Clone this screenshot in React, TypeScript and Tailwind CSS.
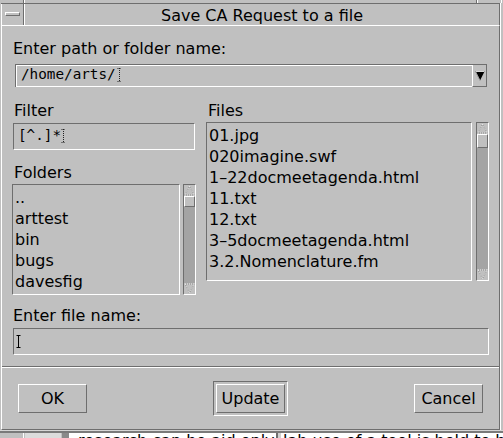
import React from "react";

function UpArrow() {
  return (
    <svg width="11" height="11" viewBox="0 0 11 11">
      <polygon points="5.5,1 10,10 1,10" fill="none" stroke="#8e8e8e" strokeWidth="1" />
      <polygon points="5.5,1 10,10 1,10" fill="none" stroke="#f4f4f4" strokeWidth="1" strokeDasharray="1 1" />
    </svg>
  );
}

function DownArrow() {
  return (
    <svg width="11" height="11" viewBox="0 0 11 11">
      <polygon points="1,1 10,1 5.5,10" fill="none" stroke="#8e8e8e" strokeWidth="1" />
      <polygon points="1,1 10,1 5.5,10" fill="none" stroke="#f4f4f4" strokeWidth="1" strokeDasharray="1 1" />
    </svg>
  );
}

function ScrollBar({ heightCls, thumbCls }: { heightCls: string; thumbCls: string }) {
  return (
    <div
      className={`w-[13px] ${heightCls} flex flex-col border border-t-[#6e6e6e] border-l-[#6e6e6e] border-r-white border-b-white bg-[#a4a4a4]`}
    >
      <div className="h-[11px] shrink-0 bg-[#c0c0c0] flex items-center justify-center">
        <UpArrow />
      </div>
      <div
        className={`${thumbCls} shrink-0 border border-t-white border-l-white border-r-[#6e6e6e] border-b-[#6e6e6e] bg-[#c0c0c0]`}
      />
      <div className="flex-1" />
      <div className="h-[11px] shrink-0 bg-[#c0c0c0] flex items-center justify-center">
        <DownArrow />
      </div>
    </div>
  );
}

function DottedCursor() {
  return (
    <svg width="5" height="14" viewBox="0 0 5 14" className="shrink-0">
      <line x1="0.5" y1="0.5" x2="4.5" y2="0.5" stroke="#222" strokeWidth="1" strokeDasharray="1 1" />
      <line x1="2.5" y1="0" x2="2.5" y2="14" stroke="#222" strokeWidth="1" strokeDasharray="1 1" />
      <line x1="0.5" y1="13.5" x2="4.5" y2="13.5" stroke="#222" strokeWidth="1" strokeDasharray="1 1" />
    </svg>
  );
}

function SolidCursor() {
  return (
    <svg width="5" height="13" viewBox="0 0 5 13" className="shrink-0">
      <line x1="0.5" y1="0.5" x2="4.5" y2="0.5" stroke="#000" strokeWidth="1" />
      <line x1="2.5" y1="0" x2="2.5" y2="13" stroke="#000" strokeWidth="1" />
      <line x1="0.5" y1="12.5" x2="4.5" y2="12.5" stroke="#000" strokeWidth="1" />
    </svg>
  );
}

const files = [
  "01.jpg",
  "020imagine.swf",
  "1–22docmeetagenda.html",
  "11.txt",
  "12.txt",
  "3–5docmeetagenda.html",
  "3.2.Nomenclature.fm",
];

const folders = ["..", "arttest", "bin", "bugs", "davesfig"];

export default function App() {
  return (
    <div className="w-[503px] h-[438px] bg-[#c0c0c0] flex flex-col overflow-hidden text-black font-['DejaVu_Sans',sans-serif] text-[16px]">
      {/* strip of the window behind, above the dialog */}
      <div className="h-[3px] flex shrink-0">
        <div className="w-[23px]" />
        <div className="w-[1px] bg-[#6e6e6e]" />
        <div className="w-[1px] bg-white" />
        <div className="w-[451px]" />
        <div className="w-[1px] bg-[#6e6e6e]" />
        <div className="w-[1px] bg-white" />
        <div className="w-[23px]" />
        <div className="w-[1px] bg-white" />
      </div>

      <div className="h-[427px] flex shrink-0">
        {/* dialog */}
        <div className="w-[500px] pl-[1px] flex">
          <div className="w-[499px] flex flex-col">
            {/* title bar */}
            <div className="h-[22px] shrink-0 flex border-t border-t-[#6e6e6e]">
              <div className="w-[23px] border-l border-l-white border-r border-r-[#6e6e6e]">
                <div className="ml-[3px] mt-[8px] w-[15px] h-[4px] border border-t-white border-l-white border-r-[#6e6e6e] border-b-[#6e6e6e]" />
              </div>
              <div className="flex-1 border-l border-l-white border-r border-r-[#6e6e6e] text-center pt-[1px] leading-[21px] whitespace-nowrap">
                Save CA Request to a file
              </div>
            </div>

            {/* body */}
            <div className="flex-1 flex flex-col border border-t-white border-l-white border-r-[#6e6e6e] border-b-[#6e6e6e]">
              <div className="mt-[14px] pl-[11px] h-[18px] leading-[18px] whitespace-nowrap">
                Enter path or folder name:
              </div>

              {/* combo box */}
              <div className="mt-[6px] ml-[13px] w-[472px] h-[23px] flex border-t border-l border-t-[#6e6e6e] border-l-[#6e6e6e]">
                <div className="flex-1 flex items-start border-t border-l border-t-white border-l-white border-b border-b-white pl-[4px] font-['DejaVu_Sans_Mono',monospace] text-[14.3px] leading-[16px]">
                  <span className="whitespace-nowrap">/home/arts/</span>
                  <span className="ml-[1px] mt-[2px]">
                    <DottedCursor />
                  </span>
                </div>
                <div className="w-[15px] flex items-center justify-center border-l border-l-white border-r border-r-[#6e6e6e] border-b border-b-[#6e6e6e]">
                  <svg width="10" height="10" viewBox="0 0 10 10">
                    <polygon points="0.5,0.5 9.5,0.5 5,9.5" fill="#000" />
                    <line x1="0.5" y1="0.5" x2="5" y2="9.5" stroke="#9a9a9a" strokeWidth="1" />
                    <line x1="1" y1="0.5" x2="9" y2="0.5" stroke="#d8d8d8" strokeWidth="1" />
                  </svg>
                </div>
              </div>

              {/* filter / folders / files */}
              <div className="mt-[15px] ml-[10px] flex gap-[10px]">
                <div className="w-[184px] flex flex-col">
                  <div className="h-[18px] leading-[18px] pl-[2px]">Filter</div>
                  <div className="mt-[3px] ml-[1px] w-[182px] h-[27px] flex items-start pt-[3px] pl-[4px] border border-t-[#6e6e6e] border-l-[#6e6e6e] border-r-white border-b-white font-['DejaVu_Sans_Mono',monospace] text-[14.3px] leading-[16px]">
                    <span className="whitespace-nowrap">[^.]*</span>
                    <span className="ml-[0px] mt-[2px]">
                      <DottedCursor />
                    </span>
                  </div>
                  <div className="mt-[14px] h-[18px] leading-[18px] pl-[2px]">Folders</div>
                  <div className="mt-[2px] flex gap-[3px]">
                    <div className="w-[168px] h-[111px] overflow-hidden pt-[2px] pl-[2px] border border-t-[#6e6e6e] border-l-[#6e6e6e] border-r-white border-b-white">
                      {folders.map((f) => (
                        <div key={f} className="h-[21px] leading-[21px] whitespace-nowrap">
                          {f}
                        </div>
                      ))}
                    </div>
                    <ScrollBar heightCls="h-[111px]" thumbCls="h-[11px]" />
                  </div>
                </div>

                <div className="w-[283px] flex flex-col">
                  <div className="h-[18px] leading-[18px] pl-[2px]">Files</div>
                  <div className="mt-[2px] flex gap-[4px]">
                    <div className="w-[266px] h-[159px] overflow-hidden pt-[2px] pl-[2px] border border-t-[#6e6e6e] border-l-[#6e6e6e] border-r-white border-b-white">
                      {files.map((f) => (
                        <div key={f} className="h-[21px] leading-[21px] whitespace-nowrap">
                          {f}
                        </div>
                      ))}
                    </div>
                    <ScrollBar heightCls="h-[159px]" thumbCls="h-[14px]" />
                  </div>
                </div>
              </div>

              <div className="mt-[12px] pl-[11px] h-[18px] leading-[18px] whitespace-nowrap">
                Enter file name:
              </div>
              <div className="mt-[3px] ml-[11px] w-[476px] h-[27px] pl-[2px] pt-[6px] border border-t-[#6e6e6e] border-l-[#6e6e6e] border-r-white border-b-white">
                <SolidCursor />
              </div>

              <div className="mt-[11px] h-[2px] border-t border-t-[#6e6e6e] border-b border-b-white" />

              <div className="mt-[13px] h-[35px] px-[16px] flex items-center justify-between">
                <div className="w-[69px] h-[29px] flex items-center justify-center leading-[18px] border border-t-white border-l-white border-r-[#6e6e6e] border-b-[#6e6e6e]">
                  OK
                </div>
                <div className="w-[75px] h-[35px] p-[2px] border border-t-[#6e6e6e] border-l-[#6e6e6e] border-r-white border-b-white">
                  <div className="w-[69px] h-[29px] flex items-center justify-center leading-[18px] border border-t-white border-l-white border-r-[#6e6e6e] border-b-[#6e6e6e]">
                    Update
                  </div>
                </div>
                <div className="w-[69px] h-[29px] flex items-center justify-center leading-[18px] border border-t-white border-l-white border-r-[#6e6e6e] border-b-[#6e6e6e]">
                  Cancel
                </div>
              </div>
            </div>
          </div>
        </div>
        {/* strip of the window behind, right of the dialog */}
        <div className="w-[3px] flex">
          <div className="w-[1px] bg-white" />
        </div>
      </div>

      {/* strip of the window behind, below the dialog */}
      <div className="h-[8px] flex flex-col shrink-0">
        <div className="h-[1px] bg-[#d6d6d6]" />
        <div className="h-[2px] bg-[#7a7a7a]" />
        <div className="h-[5px] flex overflow-hidden">
          <div className="w-[23px] bg-[#c0c0c0]" />
          <div className="w-[1px] bg-white" />
          <div className="w-[1px]" />
          <div className="w-[36px] bg-[#dcdcdc]" />
          <div className="w-[1px]" />
          <div className="w-[7px] bg-[#8a8a8a]" />
          <div className="w-[1px] bg-white" />
          <div className="w-[206px] h-[5px] bg-white overflow-hidden pl-[8px]">
            <div className="-mt-[1px] leading-[18px] whitespace-nowrap text-[16px]">
              research can be aid only in the field
            </div>
          </div>
          <div className="w-[2px] bg-[#6e6e6e]" />
          <div className="w-[3px] bg-[#d0d0d0]" />
          <div className="flex-1 h-[5px] bg-white overflow-hidden pl-[2px]">
            <div className="-mt-[1px] leading-[18px] whitespace-nowrap text-[16px]">
              lab use of a tool is held to be fair
            </div>
          </div>
        </div>
      </div>
    </div>
  );
}
